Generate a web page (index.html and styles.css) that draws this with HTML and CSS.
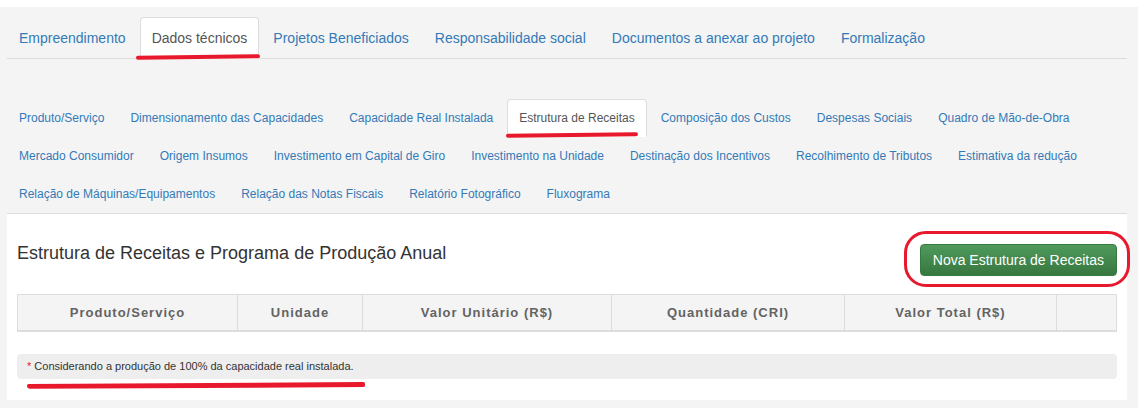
FILE: index.html
```html
<!DOCTYPE html>
<html lang="pt-BR">
<head>
  <meta charset="UTF-8" />
  <meta name="viewport" content="width=device-width, initial-scale=1.0" />
  <title>Dados técnicos - Estrutura de Receitas</title>
  <link rel="stylesheet" href="styles.css">
</head>
<body>

  <div class="page">

    <!-- Main tabs -->
    <ul class="nav-main">
      <li><a href="#">Empreendimento</a></li>
      <li class="active"><a href="#">Dados técnicos</a><span class="mark mark-main"></span></li>
      <li><a href="#">Projetos Beneficiados</a></li>
      <li><a href="#">Responsabilidade social</a></li>
      <li><a href="#">Documentos a anexar ao projeto</a></li>
      <li><a href="#">Formalização</a></li>
    </ul>

    <!-- Sub tabs -->
    <ul class="nav-sub">
      <li><a href="#">Produto/Serviço</a></li>
      <li><a href="#">Dimensionamento das Capacidades</a></li>
      <li><a href="#">Capacidade Real Instalada</a></li>
      <li class="active"><a href="#">Estrutura de Receitas</a><span class="mark mark-sub"></span></li>
      <li><a href="#">Composição dos Custos</a></li>
      <li><a href="#">Despesas Sociais</a></li>
      <li><a href="#">Quadro de Mão-de-Obra</a></li>
      <li><a href="#">Mercado Consumidor</a></li>
      <li><a href="#">Origem Insumos</a></li>
      <li><a href="#">Investimento em Capital de Giro</a></li>
      <li><a href="#">Investimento na Unidade</a></li>
      <li><a href="#">Destinação dos Incentivos</a></li>
      <li><a href="#">Recolhimento de Tributos</a></li>
      <li><a href="#">Estimativa da redução</a></li>
      <li><a href="#">Relação de Máquinas/Equipamentos</a></li>
      <li><a href="#">Relação das Notas Fiscais</a></li>
      <li><a href="#">Relatório Fotográfico</a></li>
      <li><a href="#">Fluxograma</a></li>
    </ul>

    <!-- Panel -->
    <div class="panel">
      <div class="panel-head">
        <h4 class="panel-title">Estrutura de Receitas e Programa de Produção Anual</h4>
        <div class="btn-wrap">
          <button class="btn-success">Nova Estrutura de Receitas</button>
          <span class="ring"></span>
        </div>
      </div>

      <table class="grid">
        <colgroup>
          <col class="c-prod">
          <col class="c-unid">
          <col class="c-unit">
          <col class="c-qtd">
          <col class="c-total">
          <col class="c-acoes">
        </colgroup>
        <thead>
          <tr>
            <th>Produto/Serviço</th>
            <th>Unidade</th>
            <th>Valor Unitário (R$)</th>
            <th>Quantidade (CRI)</th>
            <th>Valor Total (R$)</th>
            <th></th>
          </tr>
        </thead>
        <tbody></tbody>
      </table>

      <div class="note">
        <span class="req">*</span> Considerando a produção de 100% da capacidade real instalada.
        <span class="mark mark-note"></span>
      </div>
    </div>

  </div>

</body>
</html>
```

FILE: styles.css
```css
body {
  margin: 0;
  background: #fff;
  font-family: "Liberation Sans", Arial, sans-serif;
  color: #333;
}

.page {
  margin-top: 7px;
  padding: 10px 11px 9px 7px;
  background: #f4f4f4;
}

a {
  color: #337ab7;
  text-decoration: none;
}

/* Main tabs */
.nav-main {
  display: flex;
  list-style: none;
  margin: 0;
  padding: 0;
  border-bottom: 1px solid #ddd;
}
.nav-main li {
  position: relative;
  margin-right: 2px;
  margin-bottom: -1px;
}
.nav-main a {
  display: block;
  padding: 10px 11px;
  font-size: 14px;
  line-height: 20px;
  border: 1px solid transparent;
  border-radius: 4px 4px 0 0;
}
.nav-main li.active a {
  color: #555;
  background: #fff;
  border-color: #ddd #ddd transparent;
}

/* Sub tabs */
.nav-sub {
  display: flex;
  flex-wrap: wrap;
  list-style: none;
  margin: 40px 0 0;
  padding: 0;
}
.nav-sub li {
  position: relative;
  margin-right: 2px;
}
.nav-sub a {
  display: block;
  padding: 10px 11px;
  font-size: 12px;
  line-height: 16px;
  border: 1px solid transparent;
  border-radius: 4px 4px 0 0;
}
.nav-sub li.active a {
  color: #555;
  background: #fff;
  border-color: #ddd #ddd transparent;
}

/* Panel */
.panel {
  background: #fff;
  border-top: 1px solid #ddd;
  padding: 0 10px 21px;
}
.panel-head {
  display: flex;
  justify-content: space-between;
  align-items: flex-start;
  padding-top: 30px;
  margin-bottom: 18px;
}
.panel-title {
  margin: 0;
  font-size: 18px;
  font-weight: normal;
  line-height: 18px;
  color: #333;
}
.btn-wrap {
  position: relative;
}
.btn-success {
  display: block;
  padding: 6px 12px;
  font-family: inherit;
  font-size: 14px;
  line-height: 18px;
  color: #fff;
  background: linear-gradient(to bottom, #4f9a5c 0, #37773f 100%);
  border: 1px solid #357a3f;
  border-radius: 4px;
  cursor: pointer;
}

/* Table */
.grid {
  width: 100%;
  border-collapse: collapse;
}
.grid th {
  padding: 8px;
  font-size: 13px;
  line-height: 19px;
  font-weight: bold;
  letter-spacing: 1px;
  color: #636363;
  text-align: center;
  background: #f4f4f4;
  border: 1px solid #ddd;
  border-bottom-width: 2px;
}
.c-prod { width: 220px; }
.c-unid { width: 125px; }
.c-unit { width: 249px; }
.c-qtd { width: 233px; }
.c-total { width: 212px; }

/* Note */
.note {
  position: relative;
  margin-top: 22px;
  padding: 5px 10px;
  font-size: 11px;
  line-height: 15px;
  background: #eee;
  border-radius: 4px;
}
.req {
  color: #e0262a;
}

/* Red annotations drawn over the screenshot */
.mark {
  position: absolute;
  background: #e8192c;
  border-radius: 3px;
}
.mark-main {
  left: -4px;
  top: 38px;
  width: 124px;
  height: 4px;
  transform: rotate(-0.8deg);
}
.mark-sub {
  left: -1px;
  top: 34px;
  width: 132px;
  height: 4px;
  transform: rotate(-0.6deg);
}
.mark-note {
  left: 10px;
  top: 29px;
  width: 338px;
  height: 5px;
  border-radius: 3px 3px 3px 6px;
  transform: rotate(-0.3deg);
}
.ring {
  position: absolute;
  left: -16px;
  top: -13px;
  width: 220px;
  height: 50px;
  border: 3px solid #e8192c;
  border-radius: 22px;
  pointer-events: none;
}
```
